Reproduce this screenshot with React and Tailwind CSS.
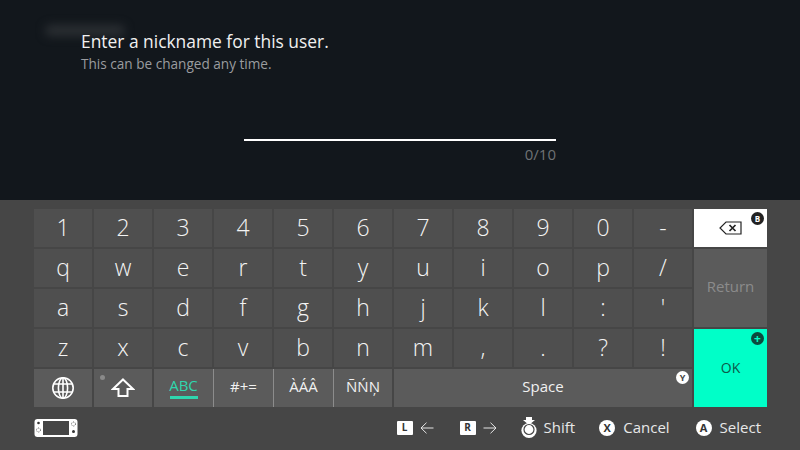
const ROWS = [
  ['1', '2', '3', '4', '5', '6', '7', '8', '9', '0', '-'],
  ['q', 'w', 'e', 'r', 't', 'y', 'u', 'i', 'o', 'p', '/'],
  ['a', 's', 'd', 'f', 'g', 'h', 'j', 'k', 'l', ':', "'"],
  ['z', 'x', 'c', 'v', 'b', 'n', 'm', ',', '.', '?', '!'],
];

function Badge({ children, className = '' }) {
  return (
    <span className={`flex items-center justify-center rounded-full font-bold leading-none ${className}`}>
      {children}
    </span>
  );
}

function Globe() {
  return (
    <svg width="24" height="24" viewBox="0 0 24 24" fill="none" stroke="#fff" strokeWidth="1.6">
      <circle cx="12" cy="12" r="10.2" />
      <ellipse cx="12" cy="12" rx="4.6" ry="10.2" />
      <path d="M12 2v20M2.8 8h18.4M2.8 16h18.4" />
    </svg>
  );
}

function ShiftArrow() {
  return (
    <svg width="24" height="20" viewBox="0 0 24 20" fill="none" stroke="#fff" strokeWidth="2">
      <path d="M12 1.5 22 11h-5.5v7h-9v-7H2z" strokeLinejoin="miter" />
    </svg>
  );
}

function BackspaceIcon() {
  return (
    <svg width="23" height="14" viewBox="0 0 23 14" fill="none" stroke="#222" strokeWidth="1.2">
      <path d="M7 1h15v12H7L1 7z" />
      <path d="M10.5 4l6 6M16.5 4l-6 6" strokeWidth="1.7" />
    </svg>
  );
}

function ConsoleIcon() {
  return (
    <svg width="44" height="20" viewBox="0 0 44 20">
      <rect x="0.5" y="1" width="43" height="18" rx="3" fill="#fff" />
      <rect x="9" y="3" width="26" height="14" fill="#464646" />
      <circle cx="4.5" cy="5" r="1.3" fill="#333" />
      <circle cx="4.5" cy="12" r="2" fill="none" stroke="#333" strokeWidth="0.8" strokeDasharray="1 1" />
      <circle cx="39.5" cy="6" r="2" fill="none" stroke="#333" strokeWidth="0.8" strokeDasharray="1 1" />
      <circle cx="39.5" cy="13.5" r="1.5" fill="#333" />
    </svg>
  );
}

function StickIcon() {
  return (
    <svg width="18" height="22" viewBox="0 0 18 22" fill="none">
      <path d="M6 0h6v3h3l-6 5-6-5h3z" fill="#fff" />
      <circle cx="9" cy="13.5" r="7.6" fill="#fff" />
      <circle cx="9" cy="12.5" r="5" fill="#fff" stroke="#464646" strokeWidth="1.2" />
    </svg>
  );
}

function Arrow({ flip }) {
  return (
    <svg width="14" height="12" viewBox="0 0 14 12" fill="none" stroke="#e4e4e4" strokeWidth="1" className={flip ? 'rotate-180' : ''}>
      <path d="M13.5 6H1M6.5 .7 1 6l5.5 5.3" />
    </svg>
  );
}

function LangKey({ label, className = '' }) {
  return (
    <div className={`flex items-center justify-center pb-[3px] text-[15px] text-[#f1f1f1] ${className}`}>
      {label}
    </div>
  );
}

function Key({ label }) {
  return (
    <div className="flex items-center justify-center bg-[#4f4f4f] pb-[2px] text-[23px] font-light text-[#f4f4f4]">
      {label}
    </div>
  );
}

export default function App() {
  return (
    <div
      className="flex h-[450px] w-[800px] flex-col overflow-hidden bg-[#464646]"
      style={{ fontFamily: '"Open Sans", "Noto Sans", sans-serif' }}
    >
      <section className="relative h-[200px] bg-[#12171c] pl-[81px] pt-[29px]">
        <div className="absolute left-[45px] top-[25px] h-[11px] w-[80px] rounded-full bg-[#2b2f33] blur-[5px]" />
        <h1 className="relative text-[17.4px] leading-[25px] text-[#f0f0f0]">Enter a nickname for this user.</h1>
        <p className="text-[13.6px] leading-[20px] text-[#9a9c9f]">This can be changed any time.</p>
        <div className="ml-[163px] mt-[65px] h-[2px] w-[312px] bg-white" />
        <div className="ml-[163px] mt-[3px] w-[312px] text-right text-[15px] leading-[20px] text-[#6f7275]">0/10</div>
      </section>

      <section className="grid grid-cols-[repeat(11,58px)_73px] grid-rows-[repeat(5,38px)] gap-[2px] pl-[34px] pt-[9px]">
        {ROWS[0].map((k) => (
          <Key key={k} label={k} />
        ))}
        <div className="relative flex items-center justify-center bg-white">
          <BackspaceIcon />
          <Badge className="absolute right-[3px] top-[3px] h-[13px] w-[13px] bg-[#222] text-[8px] text-white">B</Badge>
        </div>
        {ROWS[1].map((k) => (
          <Key key={k} label={k} />
        ))}
        <div className="row-span-2 flex items-center justify-center bg-[#5b5b5b] pb-[3px] text-[15px] text-[#8b8b8b]">Return</div>
        {ROWS[2].map((k) => (
          <Key key={k} label={k} />
        ))}
        {ROWS[3].map((k) => (
          <Key key={k} label={k} />
        ))}
        <div className="relative row-span-2 flex items-center justify-center bg-[#00ffc8] pb-[2px] text-[14px] text-[#0c5a4a]">
          OK
          <Badge className="absolute right-[3px] top-[3px] h-[13px] w-[13px] bg-[#0c4a3e] text-[12px] text-[#00ffc8]">+</Badge>
        </div>

        <div className="flex items-center justify-center bg-[#5b5b5b]">
          <Globe />
        </div>
        <div className="relative flex items-center justify-center bg-[#5b5b5b]">
          <span className="absolute left-[6px] top-[6px] h-[5px] w-[5px] rounded-full bg-[#8a8a8a]" />
          <ShiftArrow />
        </div>
        <div className="col-span-4 grid grid-cols-[59px_1px_59px_1px_59px_1px_58px] items-stretch bg-[#5b5b5b]">
          <div className="flex flex-col items-center justify-center pb-[2px] text-[15px] leading-[18px] text-[#2fd6ae]">
            ABC
            <span className="mt-[2px] h-[3px] w-[28px] bg-[#2fd6ae]" />
          </div>
          <span className="bg-[#8c8c8c]" />
          <LangKey label="#+=" />
          <span className="bg-[#8c8c8c]" />
          <LangKey label="ÀÁÂ" />
          <span className="bg-[#8c8c8c]" />
          <LangKey label="ÑŃŅ" />
        </div>
        <div className="relative col-span-5 flex items-center justify-center bg-[#5b5b5b] pb-[3px] text-[15px] text-[#f1f1f1]">
          Space
          <Badge className="absolute right-[3px] top-[2px] h-[13px] w-[13px] bg-white text-[9px] text-[#444]">Y</Badge>
        </div>
      </section>

      <footer className="flex flex-1 items-center pb-[2px] pl-[34px] pr-[39px] text-[15px] text-[#e8e8e8]">
        <ConsoleIcon />
        <div className="ml-auto flex items-center">
          <span className="flex h-[14px] w-[16px] items-center justify-center rounded-[1px] bg-white text-[10px] font-bold text-[#333]">L</span>
          <span className="ml-[7px]"><Arrow /></span>
          <span className="ml-[26px] flex h-[14px] w-[16px] items-center justify-center rounded-[1px] bg-white text-[10px] font-bold text-[#333]">R</span>
          <span className="ml-[7px]"><Arrow flip /></span>
          <span className="ml-[23px]"><StickIcon /></span>
          <span className="ml-[6px]">Shift</span>
          <Badge className="ml-[24px] h-[16px] w-[16px] bg-white text-[11px] text-[#333]">X</Badge>
          <span className="ml-[8px]">Cancel</span>
          <Badge className="ml-[26px] h-[16px] w-[16px] bg-white text-[11px] text-[#333]">A</Badge>
          <span className="ml-[8px]">Select</span>
        </div>
      </footer>
    </div>
  );
}
